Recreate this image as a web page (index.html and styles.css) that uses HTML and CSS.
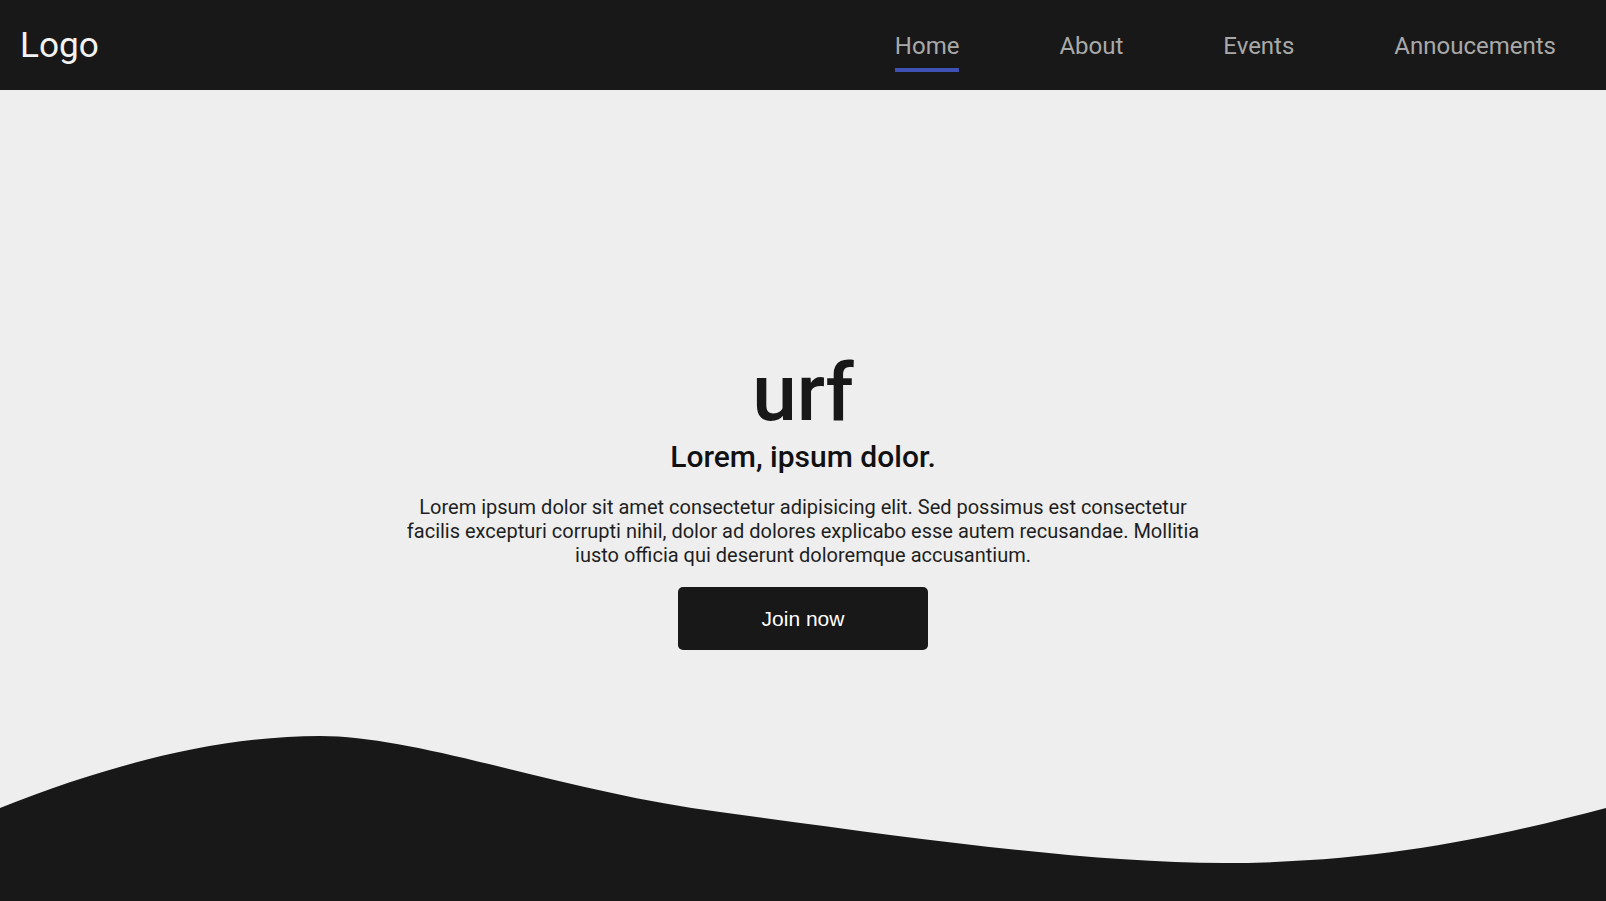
FILE: index.html
```
<!DOCTYPE html>
<html lang="en">
<head>
<meta charset="utf-8">
<title>urf</title>
<link rel="stylesheet" href="styles.css">
</head>
<body>
<header class="topbar">
  <div class="logo">Logo</div>
  <nav>
    <ul class="menu">
      <li><a class="menu-link active" href="#">Home</a></li>
      <li><a class="menu-link" href="#">About</a></li>
      <li><a class="menu-link" href="#">Events</a></li>
      <li><a class="menu-link" href="#">Annoucements</a></li>
    </ul>
  </nav>
</header>
<main class="hero">
  <div class="hero-content">
    <h1 class="title">urf</h1>
    <h2 class="subtitle">Lorem, ipsum dolor.</h2>
    <p class="lead">Lorem ipsum dolor sit amet consectetur adipisicing elit. Sed possimus est consectetur facilis excepturi corrupti nihil, dolor ad dolores explicabo esse autem recusandae. Mollitia iusto officia qui deserunt doloremque accusantium.</p>
    <button class="join">Join now</button>
  </div>
  <svg class="wave" viewBox="0 0 1606 165" preserveAspectRatio="none" aria-hidden="true">
    <path d="M0,72 C110,28 220,0 320,0 C420,0 560,55 720,76 C900,100 1080,127 1224,127 C1380,127 1500,100 1606,72 L1606,165 L0,165 Z" fill="#181818"/>
  </svg>
</main>
</body>
</html>
```
FILE: styles.css
```
* { box-sizing: border-box; }
html, body { margin: 0; padding: 0; }
body {
  background: #eeeeee;
  font-family: Roboto, "Liberation Sans", Arial, sans-serif;
  color: #181818;
  overflow: hidden;
}
.topbar {
  height: 90px;
  background: #181818;
  display: flex;
  align-items: center;
  justify-content: space-between;
  padding: 0 50px 0 20px;
}
.logo {
  font-size: 35.2px;
  color: #f2f2f2;
  font-weight: 400;
}
.menu {
  list-style: none;
  margin: 0;
  padding: 0;
  display: flex;
  gap: 100px;
  height: 90px;
}
.menu li { display: flex; }
.menu-link {
  position: relative;
  display: flex;
  align-items: center;
  height: 90px;
  padding-top: 2px;
  font-size: 24px;
  color: #a9a9a9;
  text-decoration: none;
}
.menu-link.active::after {
  content: "";
  position: absolute;
  left: 0;
  right: 0;
  bottom: 18px;
  height: 4px;
  background: #3f51b5;
}
.hero {
  position: relative;
  height: calc(100vh - 90px);
  display: flex;
  align-items: center;
  justify-content: center;
}
.hero-content {
  width: 800px;
  display: flex;
  flex-direction: column;
  align-items: center;
  text-align: center;
  margin-top: 12px;
}
.title {
  margin: 0;
  font-size: 80px;
  line-height: 80px;
  font-weight: 500;
  color: #181818;
}
.subtitle {
  margin: 6px 0 0;
  font-size: 30px;
  line-height: 36px;
  font-weight: 500;
  color: #111111;
}
.lead {
  margin: 20px 0 0;
  font-size: 20px;
  line-height: 24px;
  color: #1e1e1e;
}
.join {
  margin-top: 20px;
  width: 250px;
  height: 63px;
  border: none;
  border-radius: 5px;
  background: #181818;
  color: #ffffff;
  font-family: "Liberation Sans", Arial, sans-serif;
  font-size: 21px;
  cursor: pointer;
}
.wave {
  position: absolute;
  left: 0;
  bottom: 0;
  width: 100%;
  height: 165px;
  display: block;
}
```
